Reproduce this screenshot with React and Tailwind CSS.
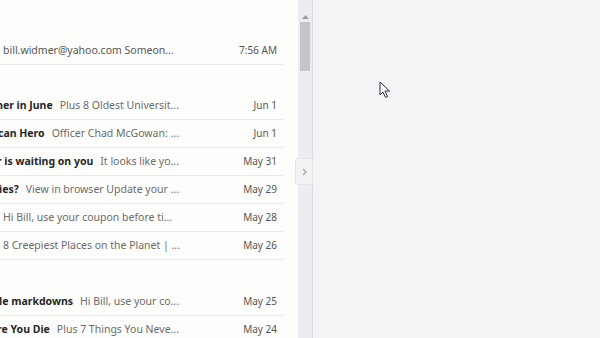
import React from 'react';

const font = { fontFamily: '"Noto Sans", "Open Sans", sans-serif' };

const group1 = [
  { subject: 'Travel Like a Local: Summer in June', preview: 'Plus 8 Oldest Universit...', date: 'Jun 1' },
  { subject: 'A Real American Hero', preview: 'Officer Chad McGowan: ...', date: 'Jun 1' },
  { subject: 'Your order is waiting on you', preview: 'It looks like yo...', date: 'May 31' },
  { subject: 'New Policies?', preview: 'View in browser Update your ...', date: 'May 29' },
  { subject: '', preview: 'Hi Bill, use your coupon before ti...', date: 'May 28' },
  { subject: '', preview: '8 Creepiest Places on the Planet | ...', date: 'May 26' },
];

const group2 = [
  { subject: 'Extra 20% off sale markdowns', preview: 'Hi Bill, use your co...', date: 'May 25' },
  { subject: '10 Places to See Before You Die', preview: 'Plus 7 Things You Neve...', date: 'May 24' },
];

function Row({ subject, preview, date }) {
  return (
    <div className="flex items-center h-[28px] border-b border-[#e9e9ea] w-[284px]">
      {subject ? (
        <div className="flex justify-end w-[179px] overflow-hidden whitespace-nowrap text-[10.5px]">
          <span className="shrink-0 font-bold text-[#262626] mr-[7px]">{subject}</span>
          <span className="shrink-0 text-[#6b6b6b]">{preview}</span>
        </div>
      ) : (
        <div className="pl-[3px] whitespace-nowrap text-[10.5px] text-[#6b6b6b]">{preview}</div>
      )}
      <div className="ml-auto pr-[7px] text-[10px] text-[#555]">{date}</div>
    </div>
  );
}

export default function App() {
  return (
    <div className="w-[600px] h-[338px] flex overflow-hidden bg-[#f4f4f7]" style={font}>
      {/* message list */}
      <div className="w-[298px] h-full bg-[#fdfdfb] overflow-hidden">
        <div className="h-[37px]" />
        <div className="flex items-center h-[28px] border-b border-[#e9e9ea] w-[284px]">
          <div className="pl-[3px] whitespace-nowrap text-[10.5px] text-[#555]">
            bill.widmer@yahoo.com Someon...
          </div>
          <div className="ml-auto pr-[7px] text-[10px] text-[#555]">7:56 AM</div>
        </div>
        <div className="h-[27px]" />
        {group1.map((m, i) => (
          <Row key={i} {...m} />
        ))}
        <div className="h-[28px]" />
        {group2.map((m, i) => (
          <Row key={i} {...m} />
        ))}
      </div>

      {/* scrollbar */}
      <div className="relative w-[15px] h-full bg-[#ededf1] border-r border-[#dcdce3]">
        <div className="flex justify-center pt-[15px]">
          <svg width="7" height="4" viewBox="0 0 7 4">
            <path d="M3.5 0 L7 4 L0 4 Z" fill="#9a9aa0" />
          </svg>
        </div>
        <div className="mx-[2px] mt-[3px] h-[49px] bg-[#c5c5c9]" />
        <div className="absolute left-[-3px] top-[158px] w-[18px] h-[27px] bg-[#f3f3f6] border border-[#e4e4e8] rounded-l-[3px] flex items-center justify-center">
          <svg width="5" height="8" viewBox="0 0 5 8">
            <path d="M1 1 L4 4 L1 7" fill="none" stroke="#a8a8b0" strokeWidth="1.3" />
          </svg>
        </div>
      </div>

      {/* reading pane */}
      <div className="relative flex-1 h-full bg-[#f4f4f7]">
        <svg className="absolute left-[66px] top-[81px]" width="13" height="18" viewBox="0 0 13 18">
          <path
            d="M1 1 L1 14 L4 11 L6.5 16.5 L8.5 15.5 L6 10 L10.5 10 Z"
            fill="#fff"
            stroke="#2a2a38"
            strokeWidth="1"
            strokeLinejoin="round"
          />
        </svg>
      </div>
    </div>
  );
}
